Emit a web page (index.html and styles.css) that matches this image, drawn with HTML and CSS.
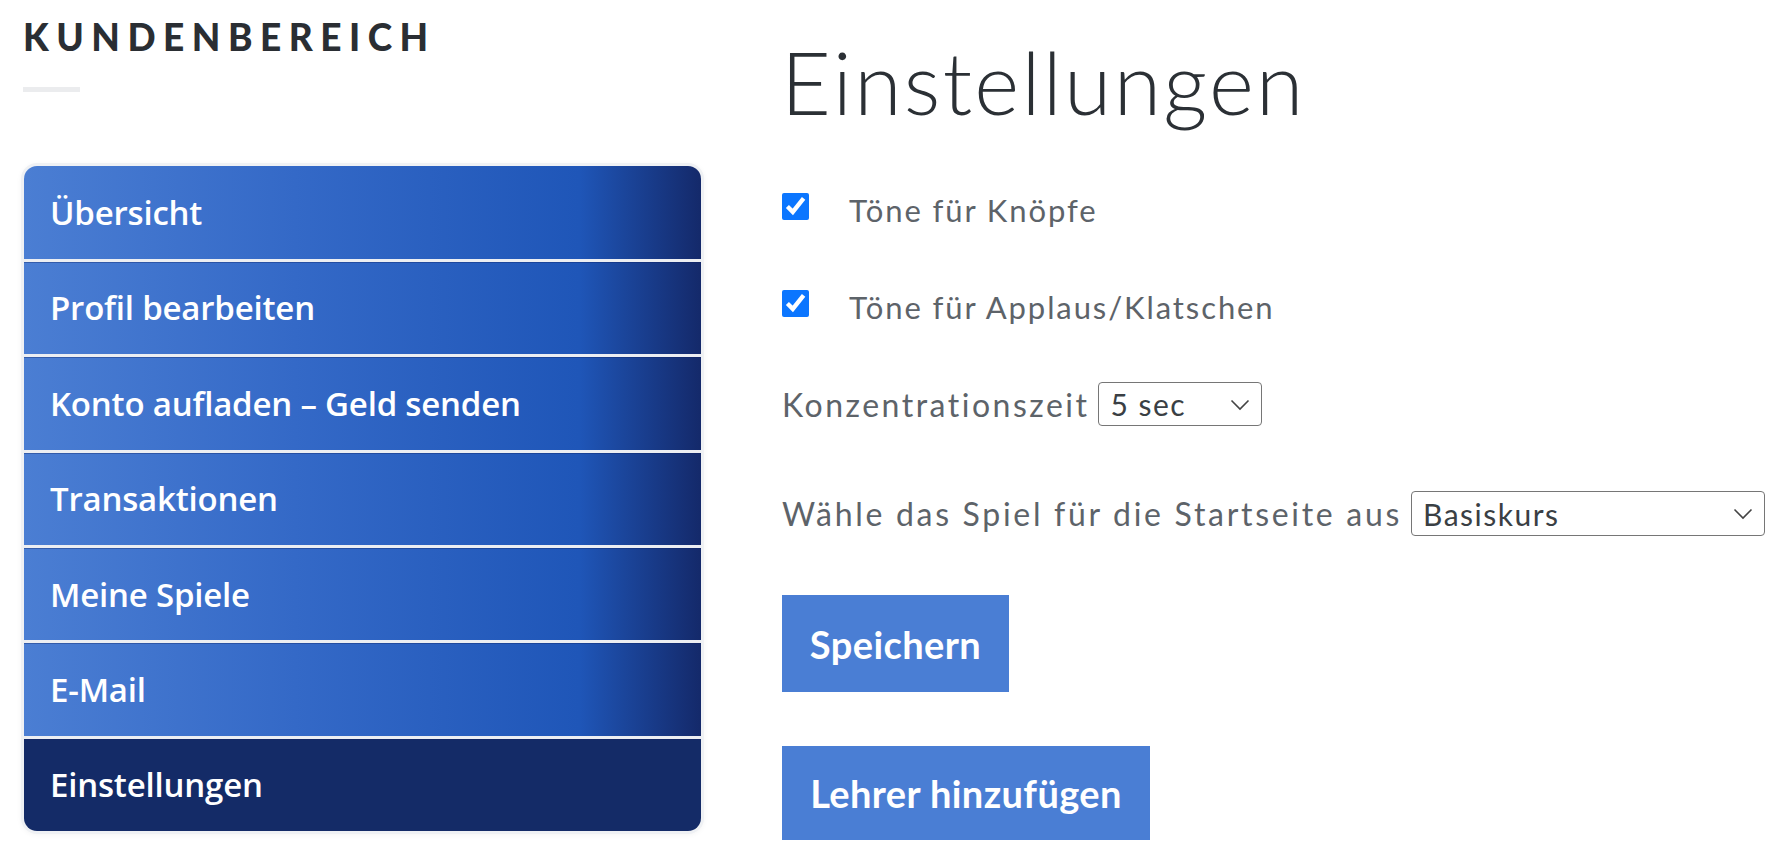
FILE: index.html
```html
<!DOCTYPE html>
<html lang="de">
<head>
    <meta charset="UTF-8">
    <meta name="viewport" content="width=device-width, initial-scale=1.0">
    <title>Einstellungen</title>
    <link rel="stylesheet" href="styles.css">
</head>
<body>
    <div class="page">
        <aside class="sidebar">
            <h2 class="brand">Kundenbereich</h2>
            <div class="brand-line"></div>
            <ul class="nav">
                <li><a href="#">Übersicht</a></li>
                <li><a href="#">Profil bearbeiten</a></li>
                <li><a href="#">Konto aufladen – Geld senden</a></li>
                <li><a href="#">Transaktionen</a></li>
                <li><a href="#">Meine Spiele</a></li>
                <li><a href="#">E-Mail</a></li>
                <li class="active"><a href="#">Einstellungen</a></li>
            </ul>
        </aside>
        <main class="settings">
            <h1>Einstellungen</h1>
            <label class="check-row first">
                <input type="checkbox" checked>
                <span>Töne für Knöpfe</span>
            </label>
            <label class="check-row second">
                <input type="checkbox" checked>
                <span>Töne für Applaus/Klatschen</span>
            </label>
            <div class="select-row time-row">
                <span>Konzentrationszeit</span>
                <span class="select-wrap small">
                    <select>
                        <option>5 sec</option>
                        <option>10 sec</option>
                        <option>15 sec</option>
                    </select>
                    <svg class="chevron" viewBox="0 0 20 12" width="20" height="12"><path d="M1.5 1.5 L10 10 L18.5 1.5" fill="none" stroke="#444" stroke-width="1.6"/></svg>
                </span>
            </div>
            <div class="select-row game-row">
                <span>Wähle das Spiel für die Startseite aus</span>
                <span class="select-wrap wide">
                    <select>
                        <option>Basiskurs</option>
                    </select>
                    <svg class="chevron" viewBox="0 0 20 12" width="20" height="12"><path d="M1.5 1.5 L10 10 L18.5 1.5" fill="none" stroke="#444" stroke-width="1.6"/></svg>
                </span>
            </div>
            <button class="btn save">Speichern</button>
            <button class="btn teacher">Lehrer hinzufügen</button>
        </main>
    </div>
</body>
</html>
```

FILE: styles.css
```css
body {
    margin: 0;
    background: #fff;
    font-family: Lato, "Open Sans", sans-serif;
}
.page {
    display: flex;
    padding-left: 24px;
    gap: 81px;
}
.sidebar {
    width: 677px;
    flex-shrink: 0;
}
.brand {
    margin: 15px 0 0 -1px;
    font-family: Lato, sans-serif;
    font-weight: 900;
    font-size: 37px;
    line-height: 1.2;
    letter-spacing: 7.5px;
    text-transform: uppercase;
    color: #2a2e33;
}
.brand-line {
    width: 57px;
    height: 5px;
    margin: 28px 0 0 -1px;
    background: #ebecee;
}
.nav {
    list-style: none;
    margin: 74px 0 0;
    padding: 0;
    border-radius: 13px;
    overflow: hidden;
    box-shadow: 0 0 0 3px #eff1f4, 0 1px 6px 2px rgba(0,0,0,0.06);
}
.nav li {
    height: 92.4px;
    display: flex;
    align-items: center;
    background: linear-gradient(to right, #4b7ed3 0%, #3469c7 40%, #1f56b8 82%, #14296a 100%);
}
.nav li + li {
    border-top: 3px solid #eceef2;
    box-shadow: inset 0 1px 0 rgba(12, 32, 96, 0.35);
}
.nav li.active {
    background: #142b67;
}
.nav a {
    padding-left: 26px;
    font-family: "Open Sans", sans-serif;
    font-weight: 600;
    font-size: 33px;
    letter-spacing: -0.2px;
    color: #fff;
    text-decoration: none;
}
.settings {
    display: flex;
    flex-direction: column;
    align-items: flex-start;
}
.settings h1 {
    margin: 30px 0 0 -1px;
    font-family: Lato, sans-serif;
    font-weight: 300;
    font-size: 86px;
    line-height: 1.2;
    letter-spacing: 2.3px;
    color: #2b3035;
}
.check-row {
    display: flex;
    align-items: center;
    height: 30px;
    font-size: 31px;
    color: #5d6369;
}
.check-row.first {
    margin-top: 58px;
}
.check-row.second {
    margin-top: 67px;
}
.check-row input {
    width: 27px;
    height: 27px;
    margin: 0 40px 0 0;
    accent-color: #0b76ff;
}
.check-row span {
    position: relative;
    top: 4px;
    letter-spacing: 1.9px;
}
.select-row {
    display: flex;
    align-items: center;
    gap: 9px;
    font-size: 32px;
    color: #5d6369;
    letter-spacing: 2.5px;
}
.time-row {
    margin-top: 64px;
}
.game-row {
    margin-top: 65px;
    letter-spacing: 2.7px;
}
.select-wrap {
    position: relative;
    display: inline-block;
}
.select-wrap select {
    appearance: none;
    -webkit-appearance: none;
    display: block;
    height: 44px;
    padding: 0 0 0 11px;
    border: 1.5px solid #767676;
    border-radius: 4px;
    background: #fff;
    font-family: Lato, sans-serif;
    font-size: 30px;
    letter-spacing: 1.5px;
    color: #3a3f44;
}
.select-wrap.small select {
    width: 164px;
}
.select-wrap.wide select {
    width: 354px;
    height: 45px;
}
.chevron {
    position: absolute;
    right: 12px;
    top: 17px;
    pointer-events: none;
}
.btn {
    border: none;
    background: #4a7ed4;
    color: #fff;
    font-family: Lato, sans-serif;
    font-weight: 700;
    font-size: 38px;
    letter-spacing: 0.4px;
    padding: 0;
    white-space: nowrap;
    text-align: center;
    cursor: pointer;
}
.btn.save {
    margin-top: 59px;
    height: 97px;
    width: 227px;
}
.btn.teacher {
    margin-top: 54px;
    height: 94px;
    width: 368px;
}
```
